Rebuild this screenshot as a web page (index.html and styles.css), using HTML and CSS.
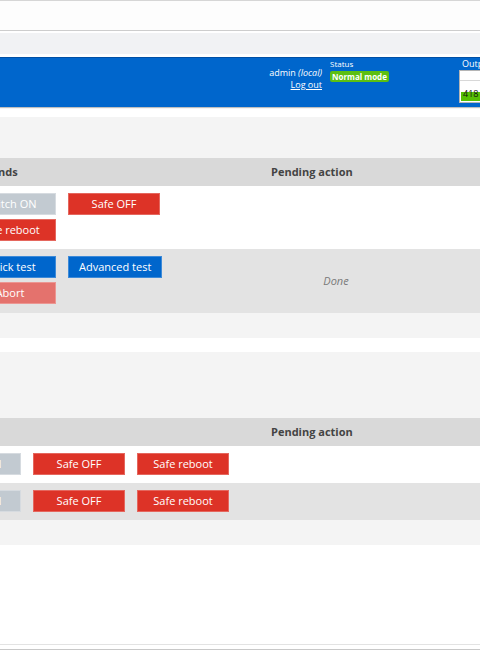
FILE: index.html
```html
<!DOCTYPE html>
<html>
<head>
<meta charset="utf-8">
<link rel="stylesheet" href="styles.css">
</head>
<body>
<div class="top"></div>
<div class="sub"></div>
<header class="banner">
  <div class="bar-inner">
    <div class="user">
      <div>admin <i>(local)</i></div>
      <a class="logout" href="#">Log out</a>
    </div>
    <div class="status">
      <div class="status-label">Status</div>
      <span class="badge">Normal mode</span>
    </div>
    <div class="output">
      <div class="output-label">Output</div>
      <div class="gauge">
        <div class="gauge-line"></div>
        <div class="gauge-bar"></div>
        <span class="gauge-val">418</span>
      </div>
    </div>
  </div>
</header>

<section class="section s1">
  <div class="tbl t1">
    <div class="tr th">
      <div class="cell">Commands</div>
      <div class="cell">Pending action</div>
      <div class="cell"></div>
    </div>
    <div class="tr r-white">
      <div class="btns two">
        <span class="btn gray">Switch ON</span>
        <span class="btn red">Safe OFF</span>
        <span class="btn red">Safe reboot</span>
      </div>
      <div class="cell pend"></div>
      <div class="cell"></div>
    </div>
    <div class="tr r-gray r-tall">
      <div class="btns two">
        <span class="btn blue">Quick test</span>
        <span class="btn blue">Advanced test</span>
        <span class="btn pink">Abort</span>
      </div>
      <div class="cell pend"><span class="done">Done</span></div>
      <div class="cell"></div>
    </div>
  </div>
</section>

<section class="section s2">
  <div class="tbl t2">
    <div class="tr th">
      <div class="cell">Commands</div>
      <div class="cell">Pending action</div>
      <div class="cell"></div>
    </div>
    <div class="tr r-white">
      <div class="btns row">
        <span class="btn gray">Switch ON</span>
        <span class="btn red">Safe OFF</span>
        <span class="btn red">Safe reboot</span>
      </div>
      <div class="cell pend"></div>
      <div class="cell"></div>
    </div>
    <div class="tr r-gray">
      <div class="btns row">
        <span class="btn gray">Switch ON</span>
        <span class="btn red">Safe OFF</span>
        <span class="btn red">Safe reboot</span>
      </div>
      <div class="cell pend"></div>
      <div class="cell"></div>
    </div>
  </div>
</section>

<footer class="footer"></footer>
</body>
</html>
```
FILE: styles.css
```css
html, body {
  margin: 0;
  padding: 0;
}
body {
  width: 480px;
  height: 650px;
  overflow: hidden;
  background: #ffffff;
  font-family: "Open Sans", "Noto Sans", sans-serif;
  color: #444;
}
.top {
  height: 29px;
  background: #fdfdfd;
  border-top: 1px solid #d6d6d6;
  border-bottom: 1px solid #cdcdcd;
}
.sub {
  margin-top: 2px;
  height: 21px;
  background: #f1f2f4;
}
.banner {
  margin-top: 3px;
  margin-bottom: 10px;
  height: 49px;
  background: #0066cc;
  border-top: 1px solid #0050a5;
  box-shadow: 0 1px 1px rgba(0,0,0,0.25);
  color: #fff;
  overflow: hidden;
}
.bar-inner {
  width: 559px;
  display: grid;
  grid-template-columns: 1fr 121px 100px;
  column-gap: 8px;
}
.user {
  padding-top: 9px;
  text-align: right;
  font-size: 9px;
  line-height: 12px;
}
.logout {
  color: #fff;
  text-decoration: underline;
}
.status {
  font-size: 8px;
  line-height: 11px;
}
.status-label {
  margin-bottom: 2px;
}
.badge {
  display: block;
  width: max-content;
  background: #5cbf12;
  color: #fff;
  font-weight: bold;
  font-size: 8px;
  line-height: 11px;
  padding: 0 2px;
  border-radius: 2px;
}
.output-label {
  font-size: 9px;
  line-height: 12px;
  padding-left: 3px;
}
.gauge {
  position: relative;
  box-sizing: border-box;
  height: 33px;
  background: #fff;
  border: 1px solid #b5b5b5;
  display: flex;
  flex-direction: column;
  justify-content: space-between;
}
.gauge-line {
  margin-top: 9px;
  height: 1px;
  background: #d8d8d8;
}
.gauge-bar {
  height: 9px;
  margin: 0 0 1px 1px;
  background: #57c004;
}
.gauge-val {
  position: absolute;
  left: 3px;
  bottom: 3px;
  font-size: 9px;
  line-height: 10px;
  color: #111;
}
.section {
  background: #f4f4f4;
  padding: 41px 0 25px;
  overflow: hidden;
}
.s2 {
  margin-top: 14px;
  padding-top: 66px;
}
.tbl {
  font-size: 11px;
}
.t1 {
  margin-left: -52px;
}
.t2 {
  margin-left: -87px;
}
.t1 .tr {
  display: grid;
  grid-template-columns: 315px 144px 1fr;
}
.t2 .tr {
  display: grid;
  grid-template-columns: 350px 144px 1fr;
}
.th {
  background: #d9d9d9;
  height: 28px;
  font-weight: bold;
  color: #444;
}
.th .cell {
  display: flex;
  align-items: center;
  padding-left: 8px;
  padding-bottom: 2px;
}
.r-white {
  background: #ffffff;
}
.r-gray {
  background: #e3e3e3;
}
.btns {
  padding: 7px 0 8px 16px;
}
.r-tall .btns {
  padding-bottom: 9px;
}
.two {
  display: grid;
  grid-template-columns: auto auto;
  justify-content: start;
  gap: 4px 12px;
}
.row {
  display: flex;
  gap: 12px;
}
.btn {
  display: block;
  box-sizing: border-box;
  height: 22px;
  min-width: 92px;
  padding: 0 10px;
  border: 1px solid;
  font-size: 11px;
  line-height: 20px;
  color: #fff;
  text-align: center;
  white-space: nowrap;
}
.red {
  background: #dd3327;
  border-color: #e5675e;
}
.blue {
  background: #0066cc;
  border-color: #3d8ad8;
}
.gray {
  background: #c2cad1;
  border-color: #d6dbe0;
}
.pink {
  background: #e4726d;
  border-color: #ec9692;
}
.pend {
  display: flex;
  align-items: center;
  justify-content: center;
  padding-bottom: 2px;
}
.done {
  font-style: italic;
  color: #7a7a7a;
  margin-left: 2px;
}
.footer {
  margin-top: 99px;
  height: 4px;
  border-top: 1px solid #e3e3e3;
  border-bottom: 1px solid #c8c8c8;
}
```
